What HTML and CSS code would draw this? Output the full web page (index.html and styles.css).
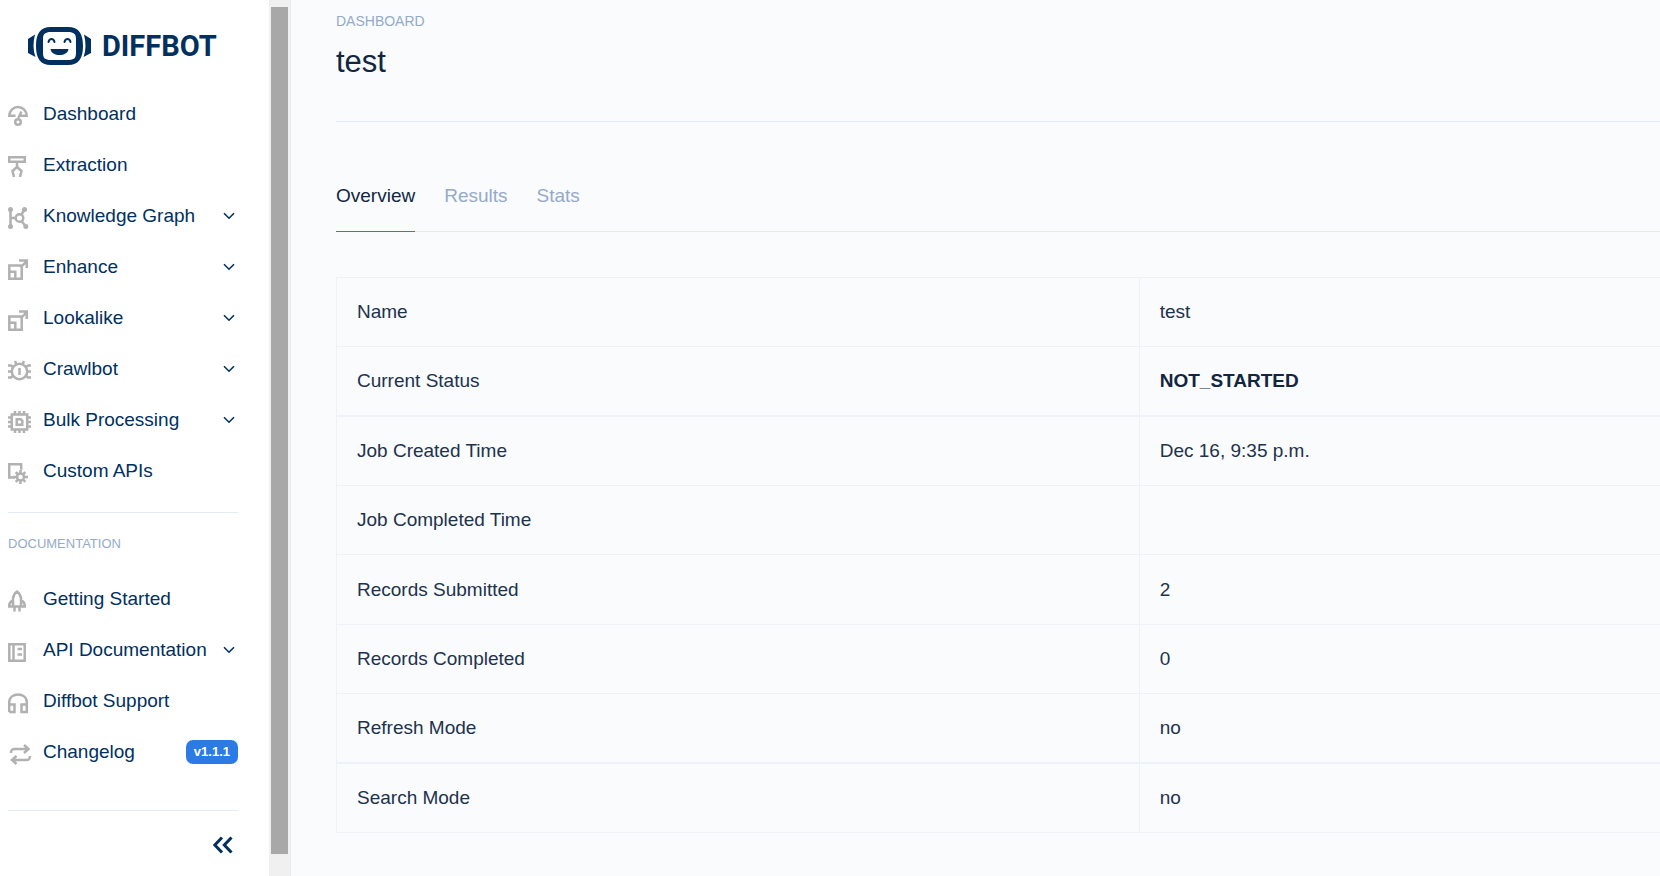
FILE: index.html
```html
<!DOCTYPE html>
<html lang="en">
<head>
<meta charset="utf-8">
<title>Diffbot Dashboard - test</title>
<link rel="stylesheet" href="styles.css">
</head>
<body>
<svg class="defs" aria-hidden="true">
  <symbol id="chevron" viewBox="0 0 12 8"><path d="M1 1.2l5 5 5-5"/></symbol>
  <symbol id="scale" viewBox="0 0 24 24"><path d="M1.300 8.400h12.400v13.300H1.300zM1.300 14.800h6v6.900M12.500 10.500l6-6.200M11 3.500h7.800v7.500"/></symbol>
</svg>
<div class="app">
  <aside class="sidebar">
    <div class="sidebar-body">
      <a class="brand" href="#">
        <svg class="brand-mark" viewBox="0 0 63 38" aria-hidden="true">
          <path class="fill" d="M0 12l7-4.500Q5.500 13 5.500 19T7.500 30L0 26zM63 12l-7-4.500Q57.500 13 57.500 19T55.500 30L63 26z"/>
          <path class="fill" fill-rule="evenodd" d="M23 0h17c11 0 15 7 15 19s-4 19-15 19H23C12 38 8 31 8 19S12 0 23 0zM23 5c-6 0-8 2-8 7v14c0 5 2 7 8 7h17c6 0 8-2 8-7V12c0-5-2-7-8-7z"/>
          <path class="line" d="M20.500 15c1-4 5-4 6 0M36.500 15c1-4 5-4 6 0"/>
          <path class="fill" d="M22.500 22h18c-1 8-17 8-18 0z"/>
        </svg>
        <span>DIFFBOT</span>
      </a>
      <nav aria-label="Main">
        <a class="item" href="#"><svg class="icon" viewBox="0 0 24 24"><path d="M7.500 11.800H1.300a8.700 8.700 0 0 1 17.400 0h-6.200M10.300 14l3.200-6.500"/><circle cx="10" cy="18" r="2.800"/></svg><span>Dashboard</span></a>
        <a class="item" href="#"><svg class="icon" viewBox="0 0 24 24"><path d="M1.200 2.200h15.600v4.600H1.200zM9 7v5.500M9 12l-4.500 4 1.500 6M9 12l4.500 4-1.500 6"/></svg><span>Extraction</span></a>
        <a class="item" href="#"><svg class="icon" viewBox="0 0 24 24"><path d="M2.500 3.500v17M3 12h5M12.800 9.500l3.500-5.500M13 14.500l5 6"/><circle cx="11.500" cy="12" r="3.800"/><g class="solid"><circle cx="2.500" cy="3.500" r="2.500"/><circle cx="2.500" cy="20.500" r="2.500"/><circle cx="16.500" cy="3.500" r="2.500"/><circle cx="17.800" cy="20.500" r="2.500"/></g></svg><span>Knowledge Graph</span><svg class="chevron"><use href="#chevron"/></svg></a>
        <a class="item" href="#"><svg class="icon"><use href="#scale"/></svg><span>Enhance</span><svg class="chevron"><use href="#chevron"/></svg></a>
        <a class="item" href="#"><svg class="icon"><use href="#scale"/></svg><span>Lookalike</span><svg class="chevron"><use href="#chevron"/></svg></a>
        <a class="item" href="#"><svg class="icon" viewBox="0 0 24 24"><circle cx="11.500" cy="12.500" r="7.700"/><path d="M11.500 9v7M0 6.500h3l2.500 2M0 12.500h4M0 18.500h3l2.500-2M23 6.500h-3l-2.500 2M23 12.500h-4M23 18.500h-3l-2.500-2M7 2l1.500 3.500M16 2l-1.500 3.500"/></svg><span>Crawlbot</span><svg class="chevron"><use href="#chevron"/></svg></a>
        <a class="item" href="#"><svg class="icon" viewBox="0 0 24 24"><path d="M3.800 4.500h15.400v15H3.800zM8.700 9.200h4l1.600 1.600v4H8.700zM7 1v3M11.500 1v3M16 1v3M7 20v3M11.500 20v3M16 20v3M0 7.500h3M0 12h3M0 16.500h3M20 7.500h3M20 12h3M20 16.500h3"/></svg><span>Bulk Processing</span><svg class="chevron"><use href="#chevron"/></svg></a>
        <a class="item" href="#"><svg class="icon" viewBox="0 0 24 24"><path d="M7 16.500H1.200V3.200h12v5.500"/><circle cx="12.500" cy="16" r="3.500"/><path d="M12.500 9v3M12.500 20v3M5.500 16h3M16.500 16h3.500M7.700 11.200l2 2M17.300 11.200l-2 2M7.700 20.800l2-2M17.300 20.800l-2-2"/></svg><span>Custom APIs</span></a>
      </nav>
      <hr>
      <h2 class="group-title">DOCUMENTATION</h2>
      <nav aria-label="Documentation">
        <a class="item" href="#"><svg class="icon" viewBox="0 0 24 24"><path d="M5 17.500V9.500Q5.500 5 9 2.500q3.500 2.500 4 7v8M5 11.500q-4 1.500-3.800 6h15.600q.2-4.500-3.800-6M6.500 18v4.500M11.500 18v4.500"/></svg><span>Getting Started</span></a>
        <a class="item" href="#"><svg class="icon" viewBox="0 0 24 24"><path d="M1.300 4.300h15.400v16.400H1.300zM5.500 4v17M9.500 9h4.500M9.500 14.500h4.500"/></svg><span>API Documentation</span><svg class="chevron"><use href="#chevron"/></svg></a>
        <a class="item" href="#"><svg class="icon" viewBox="0 0 24 24"><path d="M1.200 21V11c0-10 17.600-10 17.600 0v10h-5.300v-7.500h5.300M1.200 13.500h5.300V21H1.200"/></svg><span>Diffbot Support</span></a>
        <a class="item changelog" href="#"><svg class="icon" viewBox="0 0 24 24"><path d="M3 10c0-3 1-4 4-4h13M16 2l4.500 4-4.500 4M22 13c0 3-1 4-4 4H4.500M8.500 13L4 17l4.500 4"/></svg><span>Changelog</span><span class="badge">v1.1.1</span></a>
      </nav>
      <hr class="last">
      <button class="collapse" type="button" aria-label="Collapse sidebar"><svg viewBox="0 0 20 18"><path d="M9 1.500L1.800 9 9 16.500M18.500 1.500L11.300 9l7.200 7.500"/></svg></button>
    </div>
    <div class="scroll-track"><div class="scroll-thumb"></div></div>
  </aside>
  <main>
    <header>
      <p class="pretitle">DASHBOARD</p>
      <h1>test</h1>
    </header>
    <nav class="tabs" aria-label="Job">
      <a class="active" href="#">Overview</a>
      <a href="#">Results</a>
      <a href="#">Stats</a>
    </nav>
    <table>
      <tbody>
        <tr><th scope="row">Name</th><td>test</td></tr>
        <tr><th scope="row">Current Status</th><td><strong>NOT_STARTED</strong></td></tr>
        <tr class="section"><th scope="row">Job Created Time</th><td>Dec 16, 9:35 p.m.</td></tr>
        <tr><th scope="row">Job Completed Time</th><td></td></tr>
        <tr class="records"><th scope="row">Records Submitted</th><td>2</td></tr>
        <tr><th scope="row">Records Completed</th><td>0</td></tr>
        <tr><th scope="row">Refresh Mode</th><td>no</td></tr>
        <tr class="section"><th scope="row">Search Mode</th><td>no</td></tr>
      </tbody>
    </table>
  </main>
</div>
</body>
</html>
```

FILE: styles.css
```css
* { box-sizing: border-box; }
body {
  margin: 0;
  background: #f9fbfd;
  color: #12263f;
  font: 19px/28px "Liberation Sans", Arial, sans-serif;
}
a { color: inherit; text-decoration: none; }
.defs { position: absolute; width: 0; height: 0; }
.app { display: flex; min-height: 100vh; }

.sidebar {
  display: flex;
  flex: 0 0 291px;
  background: #fff;
  border-right: 1px solid #e3ebf6;
  color: #003060;
}
.sidebar-body { flex: 1; padding: 0 31px 0 8px; }
.brand {
  display: flex;
  align-items: center;
  gap: 11px;
  height: 88px;
  padding: 3px 0 0 20px;
  font: bold 29px/38px Roboto, sans-serif;
}
.brand-mark { width: 63px; height: 38px; }
.brand .fill { fill: #003060; }
.brand .line { fill: none; stroke: #003060; stroke-width: 2; stroke-linecap: round; }
.item { display: flex; align-items: center; height: 51px; }
.changelog { height: 52px; }
.icon {
  width: 24px;
  height: 24px;
  margin: 5px 11px 0 0;
  fill: none;
  stroke: #b1b1b1;
  stroke-width: 2.5;
}
.solid { fill: #b1b1b1; stroke: none; }
.chevron {
  width: 12px;
  height: 8px;
  margin: 0 3px 0 auto;
  fill: none;
  stroke: #003060;
  stroke-width: 1.6;
}
.badge {
  margin-left: auto;
  padding: 0 8px;
  border-radius: 7px;
  background: #2c7be5;
  color: #fff;
  font-size: 13px;
  font-weight: bold;
  line-height: 24px;
}
hr { height: 1px; margin: 16px 0 0; border: 0; background: #e3ebf6; }
.group-title {
  margin: 21px 0 19px;
  color: #95aac9;
  font-size: 13px;
  font-weight: normal;
  line-height: 20px;
}
hr.last { margin-top: 32px; }
.collapse {
  display: block;
  margin: 25px 5px 0 auto;
  padding: 0;
  border: 0;
  background: none;
}
.collapse svg { display: block; width: 20px; height: 18px; fill: none; stroke: #003060; stroke-width: 3; }
.scroll-track { width: 21px; padding: 7px 2px 22px; background: #f0f0f0; display: flex; }
.scroll-thumb { flex: 1; background: #a8a8a8; }

main { flex: 1; min-width: 0; padding: 11px 0 0 45px; }
header { height: 111px; border-bottom: 1px solid #e3ebf6; }
.pretitle { margin: 0 0 11px; color: #95aac9; font-size: 14px; line-height: 20px; }
h1 { margin: 0; font-size: 31px; font-weight: normal; line-height: 40px; }
.tabs {
  display: flex;
  gap: 29px;
  margin-bottom: 45px;
  border-bottom: 1px solid #e3ebf6;
  color: #95aac9;
}
.tabs a { margin-bottom: -1px; padding: 60px 0 21px; border-bottom: 1px solid transparent; }
.tabs .active { color: #12263f; border-color: #2c7be5; }

table { width: 100%; border-left: 1px solid #edf2f9; border-bottom: 1px solid #edf2f9; border-spacing: 0; }
th, td {
  padding: 20px;
  border-top: 1px solid #edf2f9;
  color: #1e324c;
  font-weight: normal;
  text-align: left;
}
th { width: 60.6%; }
td { border-left: 1px solid #edf2f9; height: 69px; }
strong { color: #12263f; }
.records td { height: 70px; }
.section th, .section td { border-top-width: 2px; height: 70px; }
```
